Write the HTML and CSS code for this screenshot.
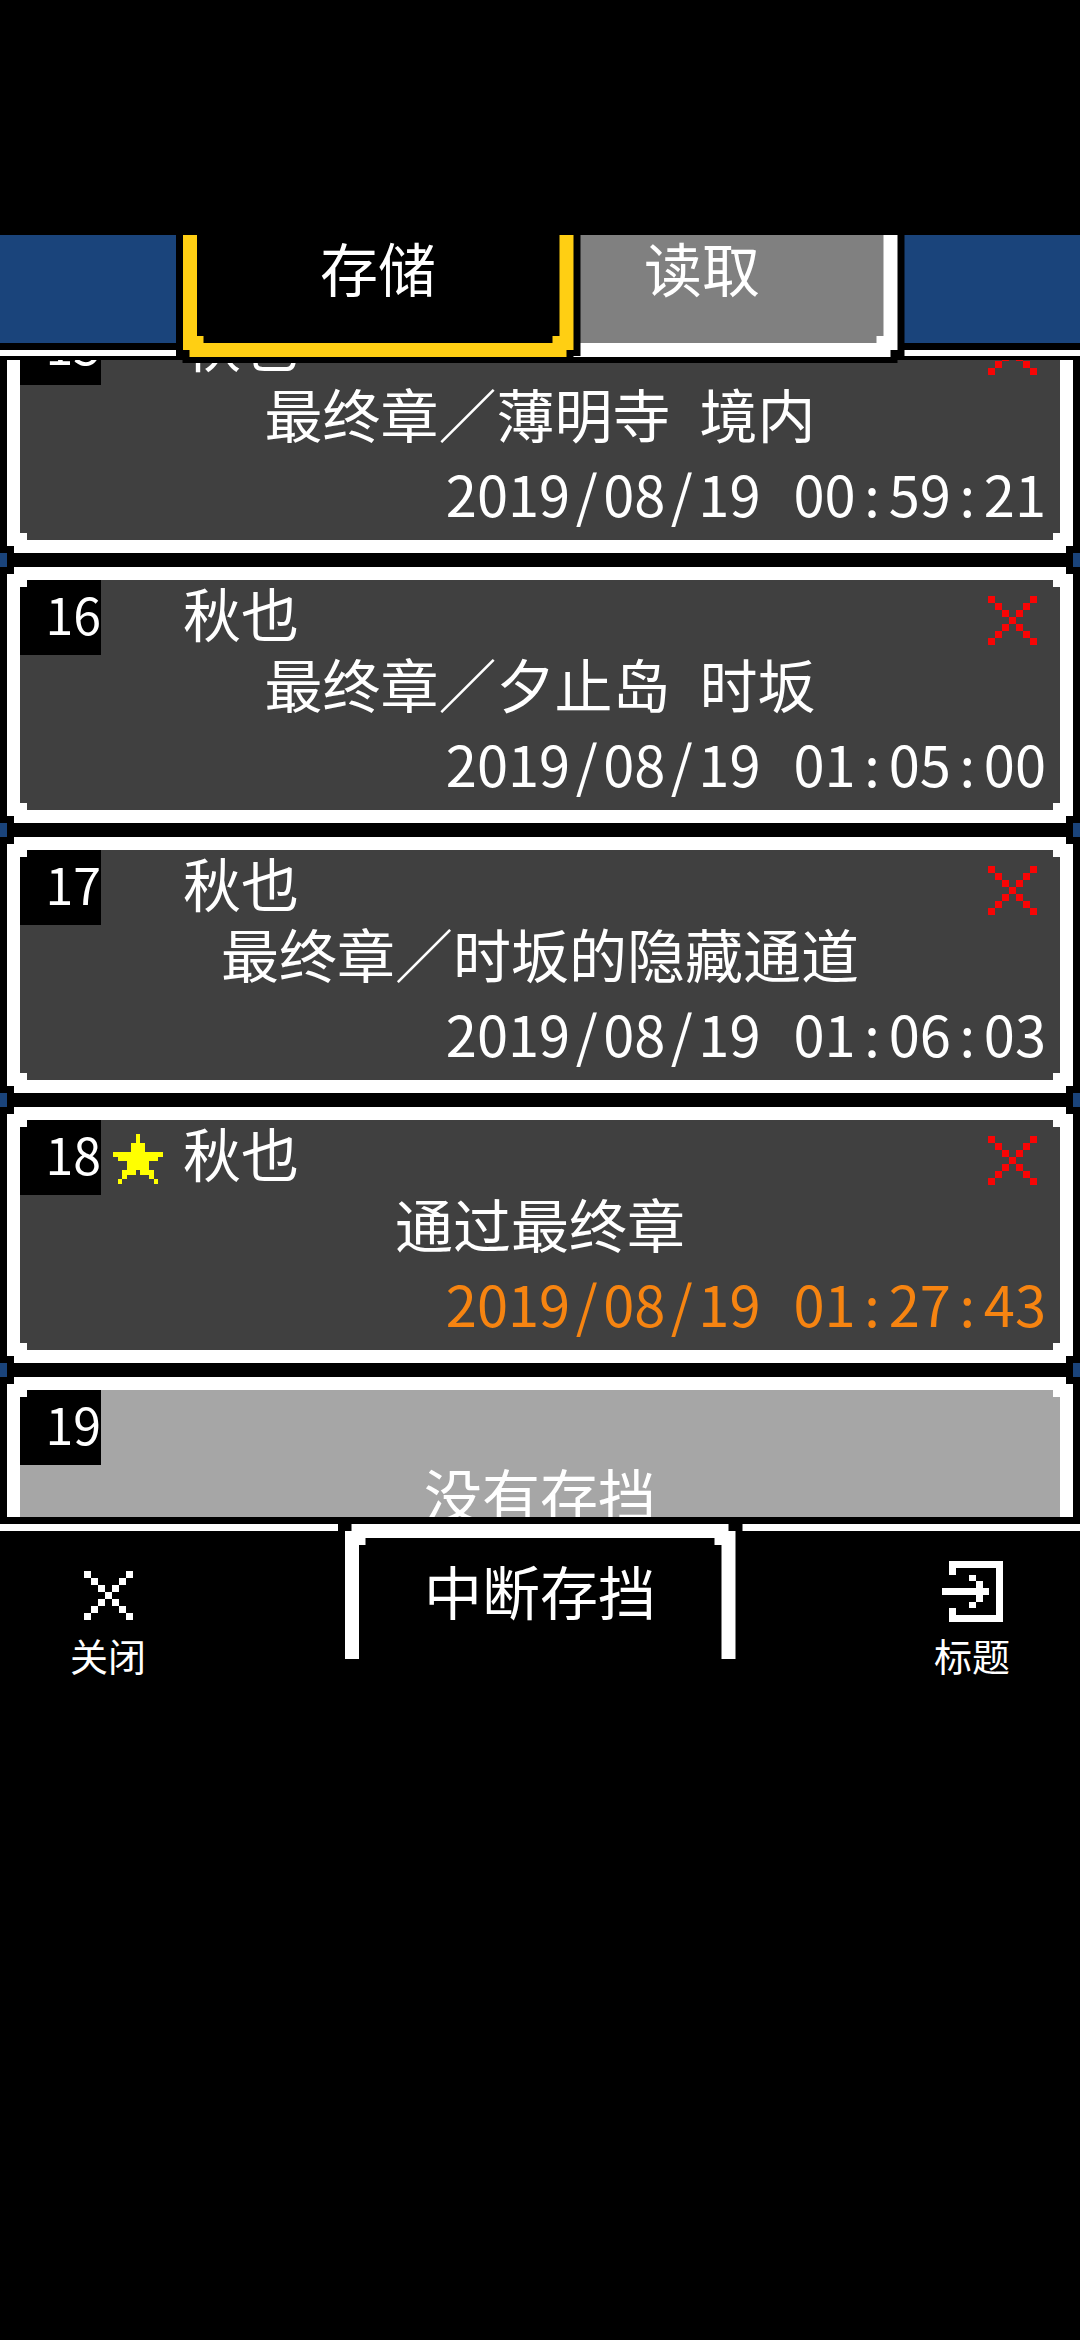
FILE: index.html
```html
<!DOCTYPE html>
<html lang="zh-CN">
<head>
  <meta charset="UTF-8" />
  <meta name="viewport" content="width=device-width, initial-scale=1.0" />
  <title>存储</title>
  <link rel="stylesheet" href="styles.css">
</head>
<body>
  <!-- shared pixel icons -->
  <svg class="sprites" aria-hidden="true">
    <symbol id="cross" viewBox="0 0 7 7">
      <path d="M0 0h1v1H0zM6 0h1v1H6zM1 1h1v1H1zM5 1h1v1H5zM2 2h1v1H2zM4 2h1v1H4zM3 3h1v1H3zM2 4h1v1H2zM4 4h1v1H4zM1 5h1v1H1zM5 5h1v1H5zM0 6h1v1H0zM6 6h1v1H6z"/>
    </symbol>
    <symbol id="star" viewBox="0 0 11 11">
      <path d="M5 0h1v2h1v2h4v1h-1v1H8v2h1v2h1v1H9v-1H8V9H7V9H6V8H5v1H3v1H2v1H1v-1h1V8h1V6H1V5H0V4h4V2h1z"/>
    </symbol>
    <symbol id="exit" viewBox="0 0 9 9">
      <path d="M1 0h8v9H1V7h1v1h6V1H2v1H1zM0 4h5V3H4V2h1v1h1v1h1v1H6v1H5v1H4V6h1V5H0z"/>
    </symbol>
  </svg>

  <header class="top-bar">
    <button class="tab tab-save">
      <span class="edge"><span class="face">存储</span></span>
    </button>
    <button class="tab tab-load">
      <span class="edge"><span class="face">读取</span></span>
    </button>
  </header>

  <main class="list">
    <ul class="slots">
      <li class="card">
        <div class="edge">
          <div class="face">
            <div class="head">
              <span class="num">15</span>
              <span class="mark"></span>
              <span class="name">秋也</span>
              <button class="del" aria-label="删除"><svg><use href="#cross"/></svg></button>
            </div>
            <p class="title">最终章／薄明寺&ensp;境内</p>
            <p class="date">2019<i>/</i>08<i>/</i>19<i> </i>00<i>:</i>59<i>:</i>21</p>
          </div>
        </div>
      </li>
      <li class="card">
        <div class="edge">
          <div class="face">
            <div class="head">
              <span class="num">16</span>
              <span class="mark"></span>
              <span class="name">秋也</span>
              <button class="del" aria-label="删除"><svg><use href="#cross"/></svg></button>
            </div>
            <p class="title">最终章／夕止岛&ensp;时坂</p>
            <p class="date">2019<i>/</i>08<i>/</i>19<i> </i>01<i>:</i>05<i>:</i>00</p>
          </div>
        </div>
      </li>
      <li class="card">
        <div class="edge">
          <div class="face">
            <div class="head">
              <span class="num">17</span>
              <span class="mark"></span>
              <span class="name">秋也</span>
              <button class="del" aria-label="删除"><svg><use href="#cross"/></svg></button>
            </div>
            <p class="title">最终章／时坂的隐藏通道</p>
            <p class="date">2019<i>/</i>08<i>/</i>19<i> </i>01<i>:</i>06<i>:</i>03</p>
          </div>
        </div>
      </li>
      <li class="card latest">
        <div class="edge">
          <div class="face">
            <div class="head">
              <span class="num">18</span>
              <span class="mark"><svg><use href="#star"/></svg></span>
              <span class="name">秋也</span>
              <button class="del" aria-label="删除"><svg><use href="#cross"/></svg></button>
            </div>
            <p class="title">通过最终章</p>
            <p class="date">2019<i>/</i>08<i>/</i>19<i> </i>01<i>:</i>27<i>:</i>43</p>
          </div>
        </div>
      </li>
      <li class="card empty">
        <div class="edge">
          <div class="face">
            <div class="head">
              <span class="num">19</span>
            </div>
            <p class="title">没有存挡</p>
          </div>
        </div>
      </li>
    </ul>
  </main>

  <footer class="bottom-bar">
    <button class="nav-btn">
      <svg class="nav-icon small"><use href="#cross"/></svg>
      <span>关闭</span>
    </button>
    <button class="tab tab-suspend">
      <span class="edge"><span class="face">中断存挡</span></span>
    </button>
    <button class="nav-btn">
      <svg class="nav-icon"><use href="#exit"/></svg>
      <span>标题</span>
    </button>
  </footer>
</body>
</html>
```
FILE: styles.css
```css
* {
  box-sizing: border-box;
}
body {
  --top-cut: 7px;
  --bottom-cut: 7px;
  margin: 0;
  padding-top: 235px;
  background: #000;
  color: #fff;
  font-family: "Noto Sans CJK SC", sans-serif;
  font-size: 58px;
  line-height: 62px;
}
button {
  margin: 0;
  padding: 0;
  border: none;
  background: none;
  color: inherit;
  font: inherit;
  cursor: pointer;
}
svg {
  display: block;
  width: 100%;
  height: 100%;
  fill: currentColor;
  shape-rendering: crispEdges;
}
.sprites {
  position: absolute;
  width: 0;
  height: 0;
}

/* stepped corners, used on outline, border and fill */
.tab, .card, .edge, .face {
  clip-path: polygon(
    7px 0, calc(100% - 7px) 0,
    calc(100% - 7px) var(--top-cut), 100% var(--top-cut),
    100% calc(100% - var(--bottom-cut)), calc(100% - 7px) calc(100% - var(--bottom-cut)),
    calc(100% - 7px) 100%, 7px 100%,
    7px calc(100% - var(--bottom-cut)), 0 calc(100% - var(--bottom-cut)),
    0 var(--top-cut), 7px var(--top-cut)
  );
}
.edge, .face {
  display: block;
}
.edge {
  background: #fff;
}

/* tabs */
.top-bar {
  --top-cut: 0px;
  position: relative;
  z-index: 1;
  display: flex;
  justify-content: center;
  align-items: flex-start;
  height: 125px;
  background: linear-gradient(#1a447b 108px, #000 108px 115px, #fff 115px 121px, #000 121px);
}
.tab {
  width: 405px;
  background: #000;
}
.tab .face {
  background: #000;
}
.top-bar .tab {
  padding: 0 7px 6px;
}
.top-bar .edge {
  padding: 0 14px 14px;
}
.top-bar .face {
  height: 108px;
  padding-top: 1px;
}
.tab-save {
  position: relative;
  z-index: 1;
}
.tab-save .edge {
  background: #ffcf13;
}
.tab-load {
  margin-left: -81px;
}
.tab-load .face {
  background: #808080;
}

/* save slots */
.list {
  height: 1157px;
  overflow: hidden;
  background: #1a447b;
}
.slots {
  margin: -70px 0 0;
  padding: 0;
  list-style: none;
}
.card {
  padding: 7px;
  background: #000;
}
.card .edge {
  padding: 13px;
}
.card .face {
  height: 230px;
  background: #404040;
}
.head {
  display: flex;
  align-items: flex-start;
  height: 72px;
  line-height: 64px;
}
.num {
  width: 81px;
  height: 75px;
  background: #000;
  font-size: 50px;
  line-height: 66px;
  text-align: right;
}
.mark {
  width: 50px;
  height: 50px;
  margin: 14px 20px 0 12px;
  color: #ff0;
}
.del {
  width: 49px;
  height: 49px;
  margin: 16px 23px 0 auto;
  color: #f80505;
}
.title {
  margin: 0;
  text-align: center;
}
.date {
  margin: 18px 14px 0 0;
  font-size: 56px;
  text-align: right;
}
.date i {
  display: inline-block;
  width: 33px;
  font-style: normal;
  text-align: center;
  white-space: pre;
}
.latest .date {
  color: #f68411;
}
.card.empty .face {
  background: #a6a6a6;
}

/* bottom menu */
.bottom-bar {
  --bottom-cut: 0px;
  display: flex;
  justify-content: space-between;
  align-items: flex-start;
  background: linear-gradient(#000 7px, #fff 7px 14px, #000 14px);
}
.nav-btn {
  display: flex;
  flex-direction: column;
  align-items: center;
  width: 20%;
  padding-top: 44px;
  font-size: 38px;
  line-height: 50px;
}
.nav-btn span {
  margin-top: 8px;
}
.nav-icon {
  width: 61px;
  height: 61px;
}
.nav-icon.small {
  padding: 10px 6px 2px;
}
.tab-suspend {
  padding: 7px 7px 0;
}
.tab-suspend .edge {
  padding: 14px 14px 0;
}
.tab-suspend .face {
  height: 121px;
  padding-top: 21px;
}
```
